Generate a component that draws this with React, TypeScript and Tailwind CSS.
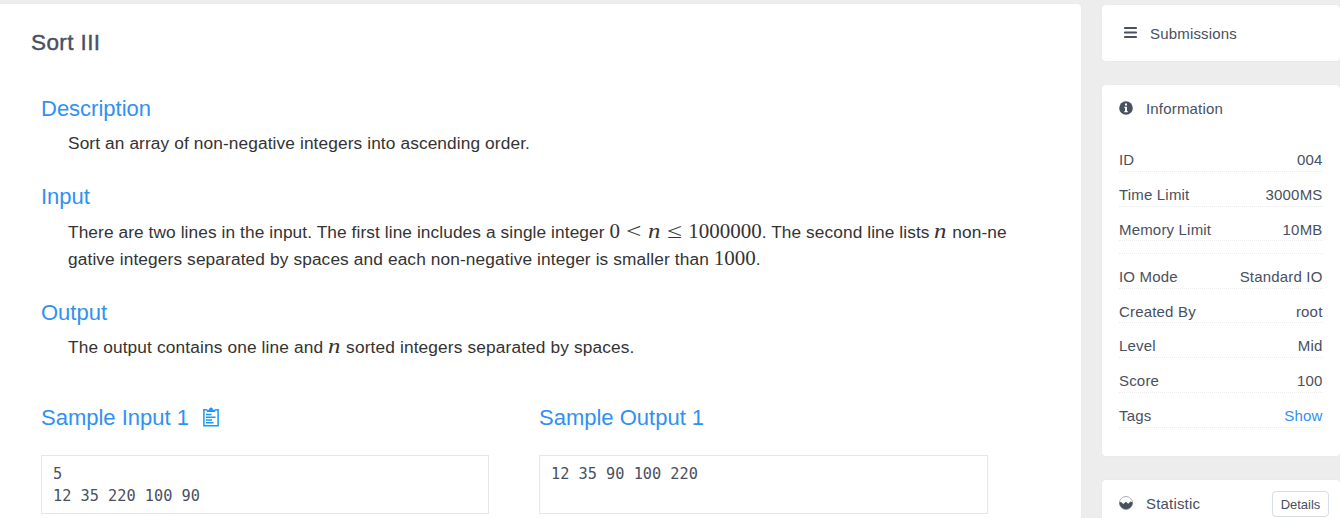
import type { ReactNode } from "react";

const info: [string, string][] = [
  ["ID", "004"],
  ["Time Limit", "3000MS"],
  ["Memory Limit", "10MB"],
];
const details: [string, string][] = [
  ["IO Mode", "Standard IO"],
  ["Created By", "root"],
  ["Level", "Mid"],
  ["Score", "100"],
  ["Tags", "Show"],
];

function Heading({ children }: { children: ReactNode }) {
  return <h2 className="flex h-[30px] items-center text-[22px] leading-[30px] text-[#3091f2]">{children}</h2>;
}

function Num({ children }: { children: ReactNode }) {
  return <span className="font-['Liberation_Serif',serif] text-[21px] leading-[0] tracking-normal">{children}</span>;
}

function VarN() {
  return (
    <span className="mr-[0.4px] inline-block w-[12.6px] origin-left scale-x-[1.2] font-['Liberation_Serif',serif] text-[20.6px] leading-[20px] tracking-normal italic">
      n
    </span>
  );
}

function Rel({ children }: { children: ReactNode }) {
  return (
    <span className="mx-[6.3px] inline-block w-[15px] origin-left scale-x-[1.3] font-['Liberation_Serif',serif] text-[21px] leading-[20px] tracking-normal">
      {children}
    </span>
  );
}

function Row({ label, value }: { label: string; value: string }) {
  return (
    <div className="flex h-[34.8px] items-end justify-between border-b border-dotted border-[#ebebeb] pb-[1.8px] leading-[18px]">
      <span>{label}</span>
      <span className={value === "Show" ? "text-[#3091f2]" : ""}>{value}</span>
    </div>
  );
}

export default function App() {
  return (
    <div className="flex h-[518px] w-[1340px] overflow-hidden bg-[#ededed] font-['Liberation_Sans',Arial,sans-serif] text-[15px] text-[#495060]">
      <main className="mt-1 h-[530px] w-[1081px] rounded-tr bg-white pt-[23px] shadow-[0_0_1px_#ddd]">
        <h1 className="ml-[31px] h-[31px] text-[22.5px] leading-[31px] tracking-[0.4px] [-webkit-text-stroke:0.4px_#495060]">Sort III</h1>
        <div className="ml-[41px] pt-[36px]">
          <Heading>Description</Heading>
          <p className="mt-[6px] ml-[27px] h-[27px] text-[17.3px] leading-[27px] tracking-[0.11px] whitespace-nowrap text-[#333]">
            Sort an array of non-negative integers into ascending order.
          </p>
          <div className="mt-[25px]">
            <Heading>Input</Heading>
          </div>
          <div className="mt-[7px] ml-[27px] h-[54px] text-[17.3px] leading-[27px] whitespace-nowrap text-[#333]">
            <p className="h-[27px] tracking-[0.09px]">
              There are two lines in the input. The first line includes a single integer <Num>0</Num>
              <Rel>&lt;</Rel>
              <VarN />
              <Rel>≤</Rel>
              <Num>1000000</Num>. The second line lists <VarN /> non-ne
            </p>
            <p className="h-[27px] tracking-[0.12px]">
              gative integers separated by spaces and each non-negative integer is smaller than <Num>1000</Num>.
            </p>
          </div>
          <div className="mt-[25px]">
            <Heading>Output</Heading>
          </div>
          <p className="mt-[6px] ml-[27px] h-[27px] text-[17.3px] leading-[27px] tracking-[0.14px] whitespace-nowrap text-[#333]">
            The output contains one line and <VarN /> sorted integers separated by spaces.
          </p>
          <div className="mt-[42px] flex gap-[50px]">
            <section className="w-[448px]">
              <Heading>
                Sample Input 1
                <svg className="mb-[2px] ml-[14px] h-5 w-4" viewBox="0 0 16 20" fill="none" stroke="#1899f9" strokeWidth="1.5">
                  <path d="M4 2.7H.9v16h14.2v-16H12" />
                  <path d="M3.8 5V2.8h2.4V1.5Q8-.6 9.8 1.5v1.3h2.4V5Z" fill="#1899f9" stroke="none" />
                  <path d="M3 7.6h5.5M3 10.2h9.5M3 13h6M3 15.8h7.5" />
                </svg>
              </Heading>
              <pre className="mt-[22px] h-[59px] border border-[#e5e7e9] pt-[7px] pl-[11px] font-['DejaVu_Sans_Mono',monospace] text-[15.25px] leading-[22px]">{"5\n12 35 220 100 90"}</pre>
            </section>
            <section className="w-[449px]">
              <Heading>Sample Output 1</Heading>
              <pre className="mt-[22px] h-[59px] border border-[#e5e7e9] pt-[7px] pl-[11px] font-['DejaVu_Sans_Mono',monospace] text-[15.25px] leading-[22px]">12 35 90 100 220</pre>
            </section>
          </div>
        </div>
      </main>

      <aside className="ml-[21px] flex w-[238px] flex-col gap-6 pt-[5px] tracking-[0.18px]">
        <div className="flex h-14 shrink-0 items-center rounded bg-white pl-[22px] shadow-[0_0_1px_#ddd]">
          <svg className="mb-[1px] h-[11px] w-[13px]" viewBox="0 0 13 11" fill="currentColor">
            <rect width="13" height="2" rx=".8" />
            <rect y="4.4" width="13" height="2.2" rx=".8" />
            <rect y="9" width="13" height="2" rx=".8" />
          </svg>
          <span className="mt-[2px] ml-[13px]">Submissions</span>
        </div>
        <div className="h-[371px] shrink-0 rounded bg-white px-[17px] shadow-[0_0_1px_#ddd]">
          <div className="flex h-[47px] items-center">
            <svg className="mb-[1px] h-[14px] w-[14px]" viewBox="0 0 14 14">
              <circle cx="7" cy="7" r="6.8" fill="#495060" />
              <path d="M6 2.6h2v1.8H6ZM5.2 5.8H8v4.5h.9v1H5.2v-1H6V6.8h-.8Z" fill="#fff" />
            </svg>
            <span className="mt-[2px] ml-[13px]">Information</span>
          </div>
          <div className="pt-[5px] pr-[0.5px]">
            {info.map(([label, value]) => (
              <Row key={label} label={label} value={value} />
            ))}
            <div className="h-[12.4px] border-b border-dotted border-[#ebebeb]" />
            {details.map(([label, value]) => (
              <Row key={label} label={label} value={value} />
            ))}
          </div>
        </div>
        <div className="flex h-[60px] shrink-0 items-start rounded bg-white pt-[11px] pr-[11px] pl-[17px] shadow-[0_0_1px_#ddd]">
          <svg className="mt-[5px] h-[14px] w-[14px]" viewBox="0 0 14 14">
            <circle cx="7" cy="7" r="6.5" fill="#fff" stroke="#737987" strokeWidth=".6" />
            <path d="m.3 6.5 1.9-.5 2 2L7 5.8l2.2 2 2.3-2.2 2.2 1A6.7 6.7 0 0 1 .3 6.5Z" fill="#495060" />
          </svg>
          <span className="mt-[4px] ml-[13px] leading-[18px]">Statistic</span>
          <button className="ml-auto h-[26px] w-[57px] rounded border border-[#d7dde4] text-[13px] leading-[25px] tracking-normal">Details</button>
        </div>
      </aside>
    </div>
  );
}
